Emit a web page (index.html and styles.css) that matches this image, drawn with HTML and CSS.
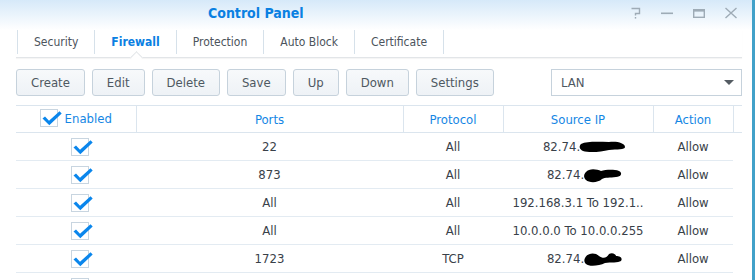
FILE: index.html
```html
<!DOCTYPE html>
<html lang="en">
<head>
<meta charset="UTF-8">
<title>Control Panel</title>
<link rel="stylesheet" href="styles.css">
</head>
<body>
<div class="window">
    <div class="titlebar">
        <span class="title">Control Panel</span>
        <div class="win-btns">
            <svg width="12" height="12" viewBox="0 0 12 12"><path d="M1.5 1.5 H9.5 V6.5 H5.5 V8.5" fill="none" stroke="#9eabb6" stroke-width="1.4"/><rect x="4.8" y="10" width="1.4" height="1.6" fill="#9eabb6"/></svg>
            <svg width="14" height="12" viewBox="0 0 14 12"><rect x="1" y="5.5" width="12" height="1.6" fill="#9eabb6"/></svg>
            <svg width="14" height="12" viewBox="0 0 14 12"><rect x="1.7" y="2.7" width="10.6" height="7.6" fill="none" stroke="#9eabb6" stroke-width="1.4"/><rect x="1" y="2" width="12" height="2.6" fill="#9eabb6"/></svg>
            <svg width="14" height="12" viewBox="0 0 14 12"><path d="M1.5 1 L12.5 11 M12.5 1 L1.5 11" stroke="#9eabb6" stroke-width="1.4"/></svg>
        </div>
    </div>

    <div class="tabs">
        <div class="tab">Security</div>
        <div class="tab active">Firewall</div>
        <div class="tab">Protection</div>
        <div class="tab">Auto Block</div>
        <div class="tab">Certificate</div>
    </div>

    <div class="content">
        <div class="toolbar">
            <button class="btn">Create</button>
            <button class="btn">Edit</button>
            <button class="btn">Delete</button>
            <button class="btn">Save</button>
            <button class="btn">Up</button>
            <button class="btn">Down</button>
            <button class="btn">Settings</button>
            <div class="select">LAN <span class="caret"></span></div>
        </div>

        <table class="grid">
            <colgroup>
                <col class="col-en">
                <col class="col-ports">
                <col class="col-proto">
                <col class="col-src">
                <col class="col-act">
                <col class="col-pad">
            </colgroup>
            <thead>
                <tr>
                    <th class="first"><span class="check"><svg viewBox="0 0 20 16"><path d="M0.5 7.5 L3 5.5 L7 9.8 L17.5 0.3 L19.7 2.4 L7.3 14.3 Z"/></svg></span>Enabled</th>
                    <th>Ports</th>
                    <th>Protocol</th>
                    <th>Source IP</th>
                    <th>Action</th>
                    <th></th>
                </tr>
            </thead>
            <tbody>
                <tr>
                    <td><span class="check"><svg viewBox="0 0 20 16"><path d="M0.5 7.5 L3 5.5 L7 9.8 L17.5 0.3 L19.7 2.4 L7.3 14.3 Z"/></svg></span></td>
                    <td>22</td>
                    <td>All</td>
                    <td class="src">82.74.<svg class="blob" width="48" height="14" viewBox="0 0 48 14"><path d="M2 4 C8 1 20 2 30 2 C38 1 46 3 46 7 C46 10 38 9 30 10 C22 12 10 13 4 11 C0 9 0 6 2 4 Z"/></svg></td>
                    <td>Allow</td>
                    <td class="pad"></td>
                </tr>
                <tr>
                    <td><span class="check"><svg viewBox="0 0 20 16"><path d="M0.5 7.5 L3 5.5 L7 9.8 L17.5 0.3 L19.7 2.4 L7.3 14.3 Z"/></svg></span></td>
                    <td>873</td>
                    <td>All</td>
                    <td class="src">82.74.<svg class="blob" width="40" height="15" viewBox="0 0 40 15"><path d="M3 4 C6 0 14 1 18 3 C22 2 30 1 36 3 C40 5 38 9 33 9 C27 10 22 9 19 11 C15 15 6 15 3 12 C0 9 1 6 3 4 Z"/></svg></td>
                    <td>Allow</td>
                    <td class="pad"></td>
                </tr>
                <tr>
                    <td><span class="check"><svg viewBox="0 0 20 16"><path d="M0.5 7.5 L3 5.5 L7 9.8 L17.5 0.3 L19.7 2.4 L7.3 14.3 Z"/></svg></span></td>
                    <td>All</td>
                    <td>All</td>
                    <td>192.168.3.1 To 192.1..</td>
                    <td>Allow</td>
                    <td class="pad"></td>
                </tr>
                <tr>
                    <td><span class="check"><svg viewBox="0 0 20 16"><path d="M0.5 7.5 L3 5.5 L7 9.8 L17.5 0.3 L19.7 2.4 L7.3 14.3 Z"/></svg></span></td>
                    <td>All</td>
                    <td>All</td>
                    <td>10.0.0.0 To 10.0.0.255</td>
                    <td>Allow</td>
                    <td class="pad"></td>
                </tr>
                <tr>
                    <td><span class="check"><svg viewBox="0 0 20 16"><path d="M0.5 7.5 L3 5.5 L7 9.8 L17.5 0.3 L19.7 2.4 L7.3 14.3 Z"/></svg></span></td>
                    <td>1723</td>
                    <td>TCP</td>
                    <td class="src">82.74.<svg class="blob" width="40" height="15" viewBox="0 0 40 15"><path d="M2 6 C4 1 12 0 16 4 C20 7 24 6 26 2 C29 0 33 2 33 4 C37 4 40 6 38 9 C35 11 28 10 22 11 C16 14 6 15 3 12 C1 10 1 8 2 6 Z"/></svg></td>
                    <td>Allow</td>
                    <td class="pad"></td>
                </tr>
                <tr>
                    <td><span class="check empty"></span></td>
                    <td></td>
                    <td></td>
                    <td></td>
                    <td></td>
                    <td class="pad"></td>
                </tr>
            </tbody>
        </table>
    </div>
</div>
</body>
</html>
```

FILE: styles.css
```css
body {
    margin: 0;
    padding: 0;
    background: #fff;
    font-family: "DejaVu Sans Condensed", "DejaVu Sans", sans-serif;
    font-stretch: condensed;
    overflow: hidden;
}
.window {
    width: 752px;
    height: 280px;
    border-right: 3px solid #41a1c9;
    background: #fff;
    overflow: hidden;
}
.titlebar {
    height: 30px;
    display: flex;
    align-items: center;
    background: linear-gradient(#d6e9f9, #ffffff);
}
.title {
    padding-left: 208px;
    font-size: 14px;
    font-weight: bold;
    color: #0a80e2;
    margin-top: -4px;
}
.win-btns {
    margin-left: auto;
    margin-right: 14px;
    margin-top: -4px;
    display: flex;
    gap: 18px;
}
.win-btns svg {
    display: block;
}
.tabs {
    display: flex;
    height: 27px;
    margin: 0 10px 0 16px;
    padding-left: 1px;
    border-bottom: 1px solid #e2e5e8;
    box-shadow: 0 1px 1px rgba(0, 0, 0, 0.04);
}
.tab {
    position: relative;
    height: 24px;
    line-height: 24px;
    padding: 0 16px;
    border-left: 1px solid #d6e1ea;
    font-size: 12px;
    color: #4c545c;
}
.tab:last-child {
    border-right: 1px solid #d6e1ea;
}
.tab.active {
    color: #0a80e2;
    font-weight: bold;
}
.tab.active::after {
    content: "";
    position: absolute;
    left: 50%;
    bottom: -8px;
    width: 8px;
    height: 8px;
    margin-left: -4px;
    background: #fff;
    border-top: 1px solid #e2e5e8;
    border-left: 1px solid #e2e5e8;
    transform: rotate(45deg);
}
.content {
    padding: 0 10px 0 16px;
}
.toolbar {
    display: flex;
    margin-top: 11px;
    height: 27px;
}
.btn {
    height: 27px;
    padding: 0 14px;
    margin-right: 7px;
    border: 1px solid #c6d2dc;
    border-radius: 3px;
    background: linear-gradient(#f7f9fb, #eef2f6);
    font-family: inherit;
    font-stretch: condensed;
    font-size: 13px;
    color: #4e5861;
}
.select {
    margin-left: auto;
    width: 180px;
    height: 25px;
    padding-left: 9px;
    border: 1px solid #c6d2dc;
    font-size: 13px;
    color: #4e5861;
    display: flex;
    align-items: center;
}
.caret {
    margin-left: auto;
    margin-right: 7px;
    width: 0;
    height: 0;
    border-left: 5px solid transparent;
    border-right: 5px solid transparent;
    border-top: 5px solid #555c63;
}
.grid {
    margin-top: 9px;
    width: 726px;
    border-collapse: collapse;
    table-layout: fixed;
}
.col-en { width: 120px; }
.col-ports { width: 267px; }
.col-proto { width: 100px; }
.col-src { width: 150px; }
.col-act { width: 80px; }
.col-pad { width: 9px; }
.grid th {
    height: 26px;
    padding: 0;
    font-weight: normal;
    font-size: 13px;
    color: #1586e4;
    border-top: 1px solid #dbe5ee;
    border-bottom: 1px solid #dbe5ee;
    border-left: 1px solid #dbe5ee;
}
.grid th.first {
    border-left: none;
}
.grid td {
    height: 27px;
    padding: 0;
    text-align: center;
    font-size: 13px;
    color: #394149;
    border-bottom: 1px solid #e3ebf2;
    white-space: nowrap;
}
.grid td.pad {
    border-bottom: none;
}
.grid td.src {
    padding-left: 14px;
}
.check {
    position: relative;
    display: inline-block;
    width: 16px;
    height: 16px;
    border: 1px solid #c8d5e0;
    background: #fff;
    vertical-align: middle;
    margin-left: 8px;
}
.check svg {
    position: absolute;
    left: 1px;
    top: 1px;
    width: 20px;
    height: 16px;
    fill: #0a86ec;
}
th .check {
    margin-left: 0;
    margin-right: 7px;
    top: -1px;
}
.blob {
    vertical-align: middle;
    margin-left: -1px;
    fill: #000;
}
```
